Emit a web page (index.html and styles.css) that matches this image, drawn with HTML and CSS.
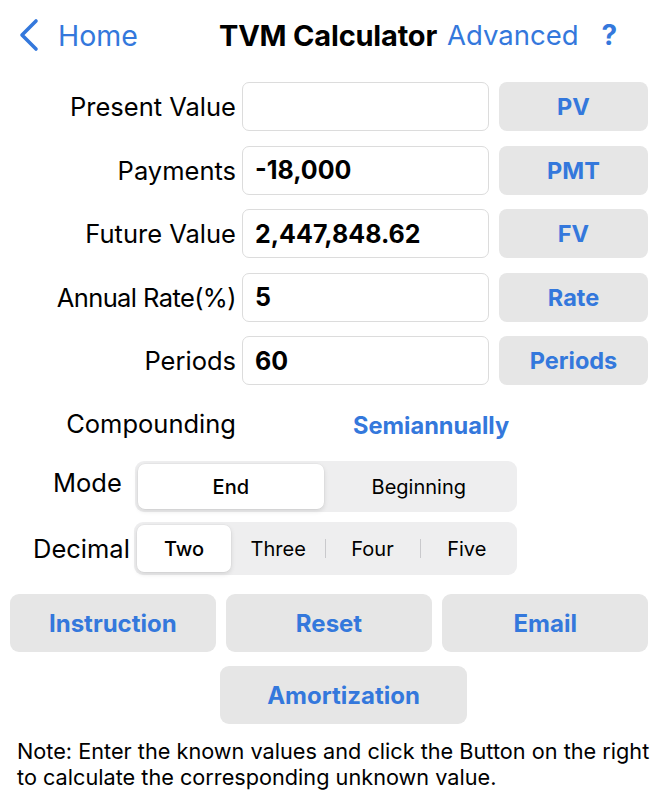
FILE: index.html
```html
<!DOCTYPE html>
<html>
<head>
<meta charset="utf-8">
<link rel="stylesheet" href="styles.css">
</head>
<body>
<div class="nav">
  <div class="back">
    <svg class="chev" width="24" height="34" viewBox="0 0 24 34"><path d="M19 3 L5 17 L19 31" fill="none" stroke="#3478dc" stroke-width="3.6" stroke-linecap="round" stroke-linejoin="round"/></svg>
    <span class="home">Home</span>
  </div>
  <div class="title">TVM Calculator</div>
  <div class="adv">Advanced</div>
  <div class="help">?</div>
</div>

<div class="form">
  <div class="row">
    <div class="label">Present Value</div>
    <div class="input"></div>
    <div class="btn">PV</div>
  </div>
  <div class="row">
    <div class="label">Payments</div>
    <div class="input">-18,000</div>
    <div class="btn">PMT</div>
  </div>
  <div class="row">
    <div class="label">Future Value</div>
    <div class="input">2,447,848.62</div>
    <div class="btn">FV</div>
  </div>
  <div class="row">
    <div class="label tight">Annual Rate(%)</div>
    <div class="input">5</div>
    <div class="btn">Rate</div>
  </div>
  <div class="row">
    <div class="label">Periods</div>
    <div class="input">60</div>
    <div class="btn">Periods</div>
  </div>
</div>

<div class="comp">
  <div class="label">Compounding</div>
  <div class="comp-val">Semiannually</div>
</div>

<div class="segrow mode">
  <div class="seglabel">Mode</div>
  <div class="seg seg2">
    <div class="opt sel">End</div>
    <div class="opt">Beginning</div>
  </div>
</div>

<div class="segrow dec">
  <div class="seglabel">Decimal</div>
  <div class="seg seg4">
    <div class="opt sel">Two</div>
    <div class="opt">Three</div>
    <div class="opt sep">Four</div>
    <div class="opt sep">Five</div>
  </div>
</div>

<div class="actions">
  <div class="abtn">Instruction</div>
  <div class="abtn">Reset</div>
  <div class="abtn">Email</div>
</div>
<div class="amort-row">
  <div class="abtn amort">Amortization</div>
</div>

<p class="note">Note: Enter the known values and click the Button on the right to calculate the corresponding unknown value.</p>
</body>
</html>
```

FILE: styles.css
```css
* { box-sizing: border-box; }
html, body { margin: 0; padding: 0; background: #fff; }
body {
  width: 659px;
  height: 811px;
  overflow: hidden;
  font-family: Inter, "Noto Sans", sans-serif;
  color: #000;
}

.nav {
  height: 70px;
  display: flex;
  align-items: center;
}
.back {
  display: flex;
  align-items: center;
  margin-left: 17px;
  width: 202px;
  flex: none;
}
.chev { margin-right: 17px; }
.home { font-size: 28.5px; color: #3478dc; }
.title { font-size: 29px; font-weight: 700; letter-spacing: -0.2px; white-space: nowrap; }
.adv { font-size: 27.5px; color: #3478dc; margin-left: 10px; }
.help { font-size: 28px; color: #3478dc; font-weight: 700; margin-left: 23px; }

.form {
  margin-top: 12px;
  display: flex;
  flex-direction: column;
  gap: 14.5px;
}
.row {
  display: flex;
  align-items: center;
  height: 49px;
}
.label {
  width: 236px;
  text-align: right;
  font-size: 25.5px;
  flex: none;
  white-space: nowrap;
}
.label.tight { letter-spacing: -0.6px; }
.input {
  margin-left: 6px;
  width: 247px;
  height: 49px;
  border: 1px solid #dcdcdc;
  border-radius: 7px;
  padding-left: 12px;
  display: flex;
  align-items: center;
  font-size: 25px;
  font-weight: 700;
}
.btn {
  margin-left: 10px;
  width: 149px;
  height: 49px;
  background: #e6e6e6;
  border-radius: 8px;
  display: flex;
  align-items: center;
  justify-content: center;
  color: #3478dc;
  font-size: 23.5px;
  font-weight: 700;
}

.comp {
  display: flex;
  align-items: center;
  height: 48px;
  margin-top: 14px;
}
.comp-val {
  margin-left: 117px;
  color: #3478dc;
  font-size: 23.6px;
  font-weight: 700;
  padding-top: 4px;
}

.segrow {
  display: flex;
  align-items: center;
}
.mode { margin-top: 14px; padding-left: 53px; }
.mode .seglabel { margin-right: 13px; margin-top: -8px; }
.dec { margin-top: 10px; padding-left: 33px; }
.dec .seglabel { margin-right: 4px; }
.seglabel { font-size: 25.5px; }

.seg {
  display: flex;
  background: #eeeeef;
  border-radius: 9px;
  padding: 3px;
  width: 382px;
  flex: none;
}
.seg2 { height: 51px; }
.seg4 { height: 53px; width: 383px; }
.opt {
  flex: 1;
  display: flex;
  align-items: center;
  justify-content: center;
  font-size: 20px;
  position: relative;
}
.opt.sel {
  background: #fff;
  border-radius: 7px;
  font-weight: 500;
  box-shadow: 0 2px 5px rgba(0,0,0,0.12), 0 0 0 0.5px rgba(0,0,0,0.04);
}
.seg2 .opt.sel { flex: none; width: 186px; }
.opt.sep::before {
  content: "";
  position: absolute;
  left: 0;
  top: 14px;
  bottom: 14px;
  width: 1px;
  background: #c9c9cc;
}

.actions {
  display: flex;
  gap: 10.5px;
  padding: 0 11px 0 10px;
  margin-top: 19px;
}
.abtn {
  flex: 1;
  height: 58px;
  background: #e6e6e6;
  border-radius: 9px;
  display: flex;
  align-items: center;
  justify-content: center;
  color: #3478dc;
  font-size: 24px;
  font-weight: 700;
}
.amort-row {
  display: flex;
  padding-left: 220px;
  margin-top: 14px;
}
.amort { flex: none; width: 247px; }

.note {
  margin: 14px 0 0 17px;
  font-size: 21.7px;
  line-height: 26px;
  width: 640px;
}
```
